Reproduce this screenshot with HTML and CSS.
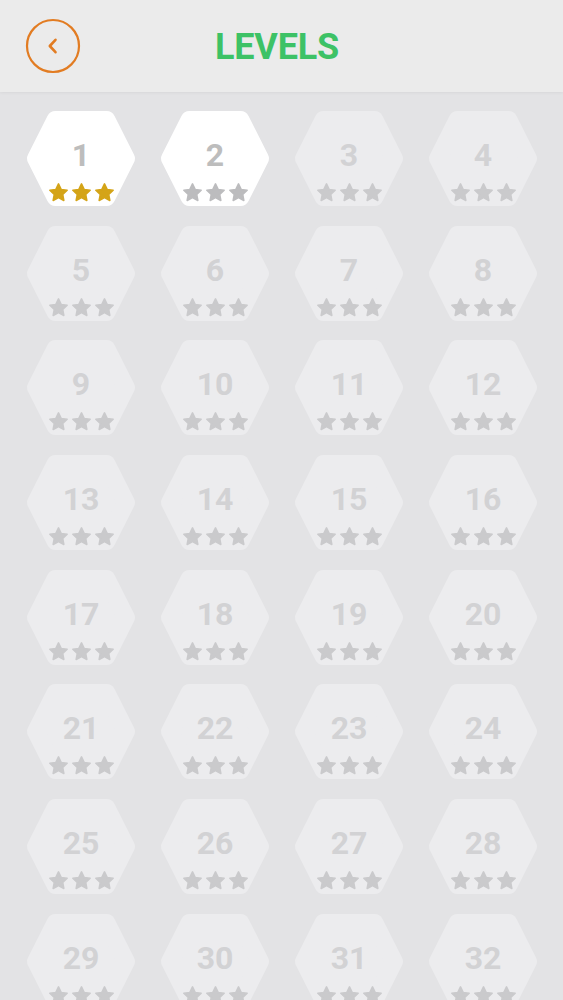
FILE: index.html
```html
<!DOCTYPE html>
<html>
<head>
<meta charset="utf-8">
<link rel="stylesheet" href="styles.css">
</head>
<body>
<header class="top">
  <button class="back" aria-label="Back">
    <svg viewBox="0 0 56 56" width="56" height="56"><circle cx="28" cy="28" r="26" fill="none" stroke="#e27c22" stroke-width="2.2"/><path d="M30.5 21.8 L24.8 28 L30.5 34.2" fill="none" stroke="#e27c22" stroke-width="2.6" stroke-linecap="round" stroke-linejoin="round"/></svg>
  </button>
  <h1 class="title">LEVELS</h1>
</header>
<main class="grid" id="grid"></main>
<script src="app.js"></script>
</body>
</html>
```
FILE: styles.css
```css
html, body { margin: 0; padding: 0; }
body {
  width: 563px;
  height: 1000px;
  overflow: hidden;
  background: #e3e3e5;
  font-family: Roboto, "Noto Sans", sans-serif;
}
.top {
  height: 92px;
  background: #ebebeb;
  display: flex;
  align-items: center;
  padding-left: 25px;
  box-shadow: 0 1px 3px rgba(0,0,0,0.05);
  position: relative;
}
.back {
  width: 56px; height: 56px; padding: 0; border: 0; background: none;
  display: block;
}
.back svg { display: block; }
.title {
  margin: 0 0 0 134px;
  font-size: 36px;
  font-weight: 700;
  color: #3dc266;
  letter-spacing: -0.2px;
  line-height: 1;
  padding-top: 2px;
}
.grid {
  display: grid;
  grid-template-columns: repeat(4, 110px);
  grid-auto-rows: 95px;
  column-gap: 24px;
  row-gap: 19.7px;
  padding: 19px 0 0 26px;
}
.hex {
  position: relative;
  width: 110px;
  height: 95px;
  display: flex;
  flex-direction: column;
  align-items: center;
}
.hex .shape { position: absolute; left: 0; top: 0; }
.hex .num {
  position: relative;
  margin-top: 28px;
  font-size: 32px;
  font-weight: 700;
  line-height: 32px;
  color: #d2d2d4;
}
.hex .stars {
  position: relative;
  display: flex;
  gap: 2px;
  margin-top: 11px;
}
.hex .stars svg { display: block; }
.hex.open .num { color: #bdbdbd; }
```
FILE: app.js
```js
var grid = document.getElementById('grid');
var star = function (c) {
  return '<svg width="21" height="21" viewBox="0 0 24 24"><path d="M12 2.2l3 6.3 6.9.9-5.1 4.8 1.3 6.9L12 17.8l-6.1 3.3 1.3-6.9-5.1-4.8 6.9-.9z" fill="' + c + '" stroke="' + c + '" stroke-width="1.8" stroke-linejoin="round"/></svg>';
};
var html = '';
for (var i = 1; i <= 32; i++) {
  var open = i <= 2;
  var fill = open ? '#ffffff' : '#ececee';
  var sc = i === 1 ? '#d4a418' : (i === 2 ? '#bcbcbe' : '#cacacc');
  html += '<div class="hex' + (open ? ' open' : '') + '">' +
    '<svg class="shape" width="110" height="95" viewBox="0 0 110 95"><polygon points="10.08,47.5 29.5,9 80.5,9 99.92,47.5 80.5,86 29.5,86" fill="' + fill + '" stroke="' + fill + '" stroke-width="18" stroke-linejoin="round"/></svg>' +
    '<div class="num">' + i + '</div>' +
    '<div class="stars">' + star(sc) + star(sc) + star(sc) + '</div></div>';
}
grid.innerHTML = html;
```
